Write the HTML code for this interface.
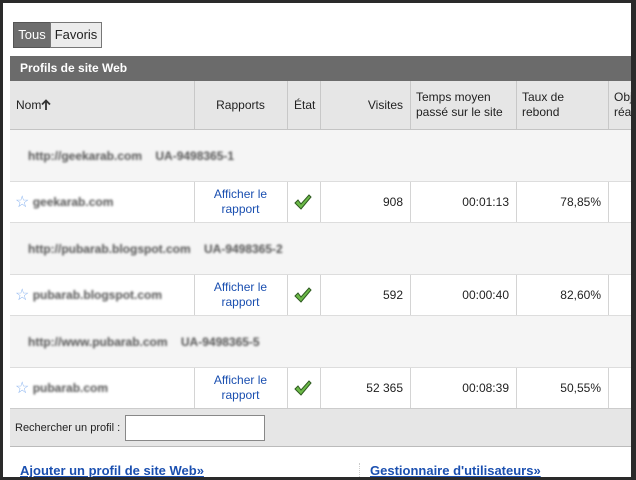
<!DOCTYPE html>
<html><head><meta charset="utf-8"><style>
*{margin:0;padding:0;box-sizing:border-box}
body{width:636px;height:480px;background:#2a2a2a;position:relative;overflow:hidden;font-family:"Liberation Sans",Arial,sans-serif;font-size:12px;color:#222}
#page{position:absolute;left:3px;top:3px;width:628px;height:474px;background:#fff;overflow:hidden}
.a{position:absolute}
.btn{position:absolute;top:19px;height:26px;line-height:24px;font-size:13px;border:1px solid #777}
.hdr{left:7px;top:53px;width:621px;height:25px;background:#6b6b6b;color:#fff;font-weight:bold;font-size:12px;line-height:25px;padding-left:10px}
.row{position:absolute;left:7px;width:621px}
.vl{position:absolute;top:0;bottom:0;width:1px;background:#d4d4d4}
.cell{position:absolute;top:0;bottom:0;display:flex;align-items:center}
.blur{color:#555;filter:blur(1.1px);font-size:12px;font-weight:bold}
.lnk{color:#1a4fb0;text-align:center;line-height:15px;justify-content:center}
.num{justify-content:flex-end;padding-right:7px}
</style></head><body><div id="page">
<div class="btn" style="left:10px;width:38px;background:#6d6d6d;color:#fff;text-align:center;border-color:#555">Tous</div>
<div class="btn" style="left:47px;width:52px;background:#ececec;color:#222;text-align:center">Favoris</div>
<div class="a hdr">Profils de site Web</div>

<div class="row" style="top:78px;height:49px;background:#e6e6e6;border-bottom:1px solid #c4c4c4">
<div class="vl" style="left:184px;background:#c8c8c8"></div><div class="vl" style="left:277px;background:#c8c8c8"></div><div class="vl" style="left:310px;background:#c8c8c8"></div><div class="vl" style="left:400px;background:#c8c8c8"></div><div class="vl" style="left:506px;background:#c8c8c8"></div><div class="vl" style="left:598px;background:#c8c8c8"></div>
<div class="cell" style="left:6px">Nom<svg width="10" height="12" viewBox="0 0 10 12"><path d="M5 11V2M1 5.5L5 1.5 9 5.5" stroke="#333" stroke-width="1.8" fill="none"/></svg></div>
<div class="cell" style="left:184px;width:93px;justify-content:center">Rapports</div>
<div class="cell" style="left:284px">État</div>
<div class="cell num" style="left:310px;width:90px">Visites</div>
<div class="cell" style="left:406px;line-height:15px">Temps moyen<br>passé sur le site</div>
<div class="cell" style="left:512px;line-height:15px">Taux de<br>rebond</div>
<div class="cell" style="left:604px;line-height:15px">Obj<br>réa</div>
</div>

<div class="row" style="top:127px;height:52px;background:#f5f5f5;border-bottom:1px solid #ddd"><div class="cell blur" style="left:18px">http://geekarab.com &nbsp;&nbsp; UA-9498365-1</div></div>
<div class="row" style="top:179px;height:41px;background:#fff;border-bottom:1px solid #ddd">
<div class="vl" style="left:184px"></div><div class="vl" style="left:277px"></div><div class="vl" style="left:310px"></div><div class="vl" style="left:400px"></div><div class="vl" style="left:506px"></div><div class="vl" style="left:598px"></div>
<div class="cell" style="left:5px"><span style="color:#8ab4f0;font-size:16px">☆</span>&nbsp;<span class="blur">geekarab.com</span></div>
<div class="cell lnk" style="left:184px;width:93px">Afficher le<br>rapport</div>
<div class="cell" style="left:284px"><svg width="18" height="16" viewBox="0 0 18 16"><path d="M1 9L4 6 7 10 15 1 17 3 7 15Z" fill="#6cba48" stroke="#2e5a20" stroke-width="1"/></svg></div>
<div class="cell num" style="left:310px;width:90px">908</div>
<div class="cell num" style="left:400px;width:106px">00:01:13</div>
<div class="cell num" style="left:506px;width:92px">78,85%</div>
</div>
<div class="row" style="top:220px;height:52px;background:#f5f5f5;border-bottom:1px solid #ddd"><div class="cell blur" style="left:18px">http://pubarab.blogspot.com &nbsp;&nbsp; UA-9498365-2</div></div>
<div class="row" style="top:272px;height:41px;background:#fff;border-bottom:1px solid #ddd">
<div class="vl" style="left:184px"></div><div class="vl" style="left:277px"></div><div class="vl" style="left:310px"></div><div class="vl" style="left:400px"></div><div class="vl" style="left:506px"></div><div class="vl" style="left:598px"></div>
<div class="cell" style="left:5px"><span style="color:#8ab4f0;font-size:16px">☆</span>&nbsp;<span class="blur">pubarab.blogspot.com</span></div>
<div class="cell lnk" style="left:184px;width:93px">Afficher le<br>rapport</div>
<div class="cell" style="left:284px"><svg width="18" height="16" viewBox="0 0 18 16"><path d="M1 9L4 6 7 10 15 1 17 3 7 15Z" fill="#6cba48" stroke="#2e5a20" stroke-width="1"/></svg></div>
<div class="cell num" style="left:310px;width:90px">592</div>
<div class="cell num" style="left:400px;width:106px">00:00:40</div>
<div class="cell num" style="left:506px;width:92px">82,60%</div>
</div>
<div class="row" style="top:313px;height:52px;background:#f5f5f5;border-bottom:1px solid #ddd"><div class="cell blur" style="left:18px">http://www.pubarab.com &nbsp;&nbsp; UA-9498365-5</div></div>
<div class="row" style="top:365px;height:41px;background:#fff;border-bottom:1px solid #ccc">
<div class="vl" style="left:184px"></div><div class="vl" style="left:277px"></div><div class="vl" style="left:310px"></div><div class="vl" style="left:400px"></div><div class="vl" style="left:506px"></div><div class="vl" style="left:598px"></div>
<div class="cell" style="left:5px"><span style="color:#8ab4f0;font-size:16px">☆</span>&nbsp;<span class="blur">pubarab.com</span></div>
<div class="cell lnk" style="left:184px;width:93px">Afficher le<br>rapport</div>
<div class="cell" style="left:284px"><svg width="18" height="16" viewBox="0 0 18 16"><path d="M1 9L4 6 7 10 15 1 17 3 7 15Z" fill="#6cba48" stroke="#2e5a20" stroke-width="1"/></svg></div>
<div class="cell num" style="left:310px;width:90px">52 365</div>
<div class="cell num" style="left:400px;width:106px">00:08:39</div>
<div class="cell num" style="left:506px;width:92px">50,55%</div>
</div>
<div class="row" style="top:406px;height:38px;background:#e6e6e6;border-bottom:1px solid #bbb">
<div class="cell" style="left:5px;font-size:11px">Rechercher un profil :</div>
<div class="a" style="left:115px;top:6px;width:140px;height:26px;background:#fff;border:1px solid #888"></div>
</div>
<div class="a" style="left:17px;top:460px;color:#1a4fb0;font-weight:bold;font-size:13px;text-decoration:underline">Ajouter un profil de site Web»</div>
<div class="a" style="left:356px;top:460px;height:20px;border-left:1px dotted #ccc"></div>
<div class="a" style="left:367px;top:460px;color:#1a4fb0;font-weight:bold;font-size:13px;text-decoration:underline">Gestionnaire d'utilisateurs»</div>
</div></body></html>
